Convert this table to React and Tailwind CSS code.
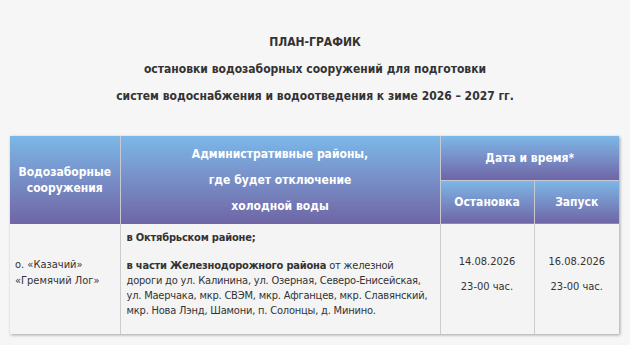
export default function App() {
  const head = 'bg-gradient-to-b from-[#7bb8e8] to-[#6e65a5] text-white font-bold text-center align-middle'
  return (
    <div className="min-h-[345px] bg-[#f6f6f6] pt-[29px] text-[#333] font-['DejaVu_Sans_Condensed','DejaVu_Sans',sans-serif]">
      <div className="text-center font-bold text-[12px] leading-[27px] text-[#333]">
        <p>ПЛАН-ГРАФИК</p>
        <p>остановки водозаборных сооружений для подготовки</p>
        <p>систем водоснабжения и водоотведения к зиме 2026 – 2027 гг.</p>
      </div>

      <table className="ml-[10px] mt-[26px] w-[609px] table-fixed border-collapse bg-[#f4f4f4] text-[11px] shadow-[1px_1px_3px_rgba(0,0,0,0.35)]">
        <colgroup>
          <col className="w-[110px]" />
          <col className="w-[320px]" />
          <col className="w-[94px]" />
          <col className="w-[85px]" />
        </colgroup>
        <thead>
          <tr className="h-[44px]">
            <th rowSpan={2} className={`${head} border-r border-[#c9c9d6] text-[12px] leading-[16px] px-1`}>
              Водозаборные<br />сооружения
            </th>
            <th rowSpan={2} className={`${head} border-r border-[#c9c9d6] text-[12px] leading-[26px]`}>
              <p>Административные районы,</p>
              <p>где будет отключение</p>
              <p>холодной воды</p>
            </th>
            <th colSpan={2} className={`${head} text-[12px] border-b border-[#c9c9d6]`}>
              Дата и время*
            </th>
          </tr>
          <tr className="h-[44px]">
            <th className={`${head} border-r border-[#c9c9d6] text-[12px]`}>Остановка</th>
            <th className={`${head} text-[12px]`}>Запуск</th>
          </tr>
        </thead>
        <tbody>
          <tr className="h-[110px]">
            <td className="border-r border-[#cccccc] px-[5px] align-middle leading-[16px] pb-[12px]">
              о. «Казачий»<br />«Гремячий Лог»
            </td>
            <td className="border-r border-[#cccccc] pl-[6px] pr-[9px] pt-[6px] pb-[14px] align-top leading-[15px] tracking-[-0.2px]">
              <p className="font-bold">в Октябрьском районе;</p>
              <p className="mt-[13px]">
                <b>в части Железнодорожного района</b> от железной дороги до ул. Калинина, ул. Озерная, Северо-Енисейская, ул. Маерчака, мкр. СВЭМ, мкр. Афганцев, мкр. Славянский, мкр. Нова Лэнд, Шамони, п. Солонцы, д. Минино.
              </p>
            </td>
            <td className="border-r border-[#cccccc] text-center align-middle leading-[25px] pb-[10px]">
              <p>14.08.2026</p>
              <p>23-00 час.</p>
            </td>
            <td className="text-center align-middle leading-[25px] pb-[10px]">
              <p>16.08.2026</p>
              <p>23-00 час.</p>
            </td>
          </tr>
        </tbody>
      </table>
    </div>
  )
}
